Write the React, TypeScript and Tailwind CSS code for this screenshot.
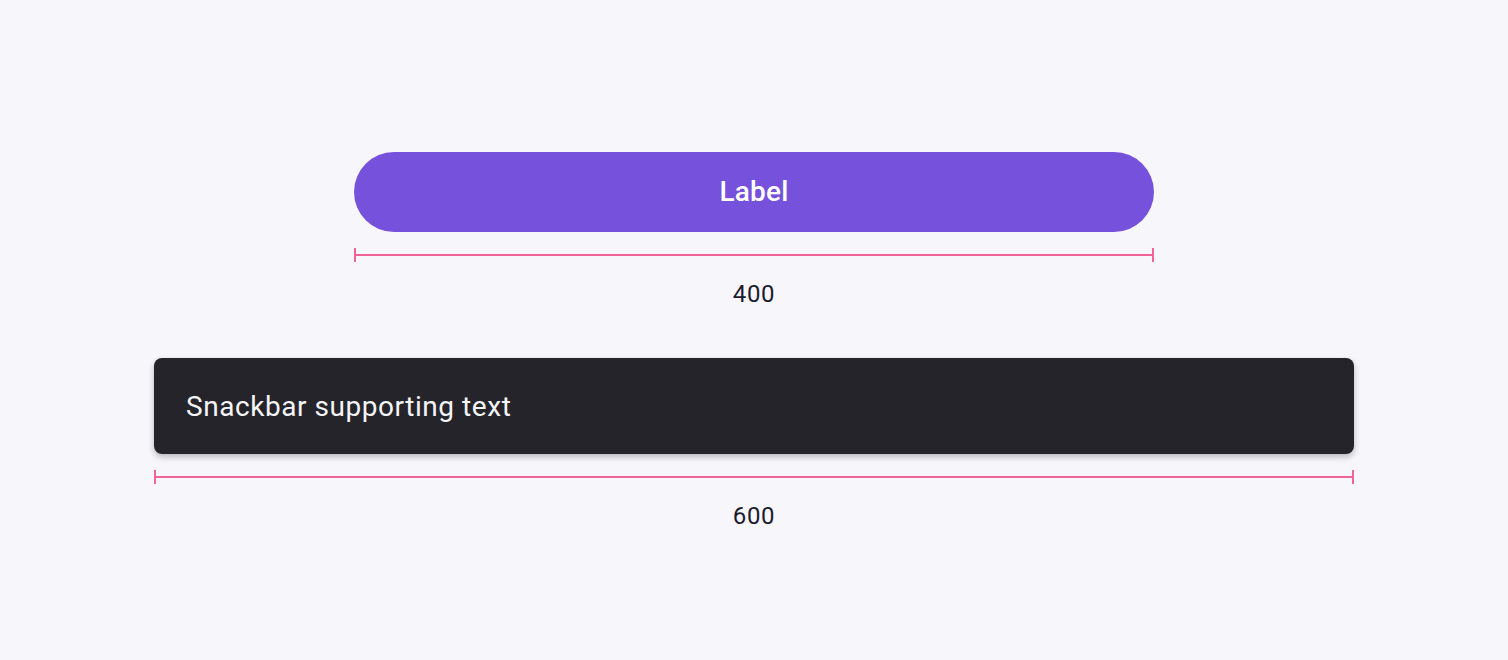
function Measure({ width, label }: { width: string; label: string }) {
  return (
    <div className={`flex flex-col items-center ${width}`}>
      <div className="relative flex h-[14px] w-full items-center">
        <div className="h-full w-[2px] bg-[#f0649a]" />
        <div className="h-[2px] flex-1 bg-[#f0649a]" />
        <div className="h-full w-[2px] bg-[#f0649a]" />
      </div>
      <div className="mt-4 text-[24px] leading-[32px] tracking-[0.6px] text-[#1c1b2e]">{label}</div>
    </div>
  );
}

export default function App() {
  return (
    <div
      className="flex min-h-[660px] w-full flex-col items-center bg-[#f7f6fb] pt-[152px]"
      style={{ fontFamily: 'Roboto, "Noto Sans", sans-serif' }}
    >
      <button className="flex h-[80px] w-[800px] items-center justify-center rounded-full bg-[#7551dc] text-[28px] font-medium tracking-[0.2px] text-white">
        Label
      </button>
      <div className="mt-4">
        <Measure width="w-[800px]" label="400" />
      </div>

      <div className="mt-12 flex h-[96px] w-[1200px] items-center rounded-lg bg-[#25242a] px-8 shadow-[0_3px_6px_rgba(0,0,0,0.25)]">
        <span className="pt-[2px] text-[28px] tracking-[0.55px] text-[#f5f4f8]">Snackbar supporting text</span>
      </div>
      <div className="mt-4">
        <Measure width="w-[1200px]" label="600" />
      </div>
    </div>
  );
}
